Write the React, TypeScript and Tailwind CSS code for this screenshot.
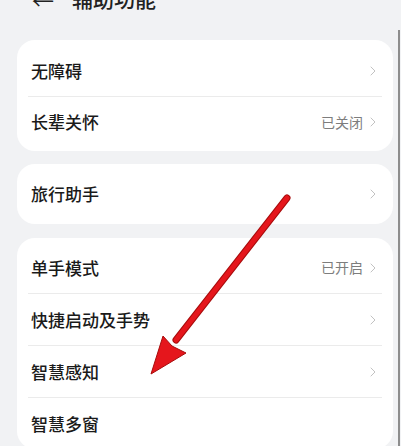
import { ChevronRight } from "lucide-react";

interface Row {
  label: string;
  value?: string;
  chevron?: boolean;
}

const GROUPS: { rows: Row[]; rowH: string; pad: string; gap: string }[] = [
  {
    rows: [
      { label: "无障碍", chevron: true },
      { label: "长辈关怀", value: "已关闭", chevron: true },
    ],
    rowH: "h-[50px]",
    pad: "pt-[6px] pb-[4px]",
    gap: "mt-[40px]",
  },
  {
    rows: [{ label: "旅行助手", chevron: true }],
    rowH: "h-[60px]",
    pad: "py-0",
    gap: "mt-[13px]",
  },
  {
    rows: [
      { label: "单手模式", value: "已开启", chevron: true },
      { label: "快捷启动及手势", chevron: true },
      { label: "智慧感知", chevron: true },
      { label: "智慧多窗" },
    ],
    rowH: "h-[51px]",
    pad: "pt-[4px]",
    gap: "mt-[14px]",
  },
];

function SettingRow({ row, h, last }: { row: Row; h: string; last: boolean }) {
  return (
    <div className="flex flex-col">
      <div className={`flex items-center justify-between pl-[14px] pr-[12px] ${h}`}>
        <span className="text-[17px] font-medium text-[#1a1a1a]">{row.label}</span>
        <div className="flex items-center gap-[2px]">
          {row.value && <span className="text-[14px] text-[#7d7d7d]">{row.value}</span>}
          {row.chevron && <ChevronRight size={16} strokeWidth={1.5} className="text-[#c2c2c2]" />}
        </div>
      </div>
      {!last && <div className="mx-[11px] h-px bg-[#ebebeb]" />}
    </div>
  );
}

export default function App() {
  return (
    <div
      className="relative w-[401px] h-[446px] overflow-hidden bg-[#f1f2f4] flex"
      style={{ fontFamily: '"Noto Sans CJK SC", "Noto Sans", sans-serif' }}
    >
      <div className="flex-1 flex flex-col">
        <div className="h-0 flex items-center pl-[32px] gap-[18px]">
          <span className="text-[22px] text-[#222] leading-none -mt-[2px]">←</span>
          <span className="text-[21px] font-medium text-[#222] leading-none -mt-[4px]">辅助功能</span>
        </div>
        {GROUPS.map((g, gi) => (
          <div key={gi} className={`${g.gap} ml-[17px] mr-[5px] bg-white rounded-[18px] ${g.pad}`}>
            {g.rows.map((r, i) => (
              <SettingRow key={i} row={r} h={g.rowH} last={i === g.rows.length - 1} />
            ))}
          </div>
        ))}
      </div>
      <div className="w-[3px] flex flex-col">
        <div className="h-[30px]" />
        <div className="flex-1 w-[2px] bg-[#8d8d8d]" />
      </div>

      {/* red annotation arrow */}
      <svg className="absolute left-0 top-0 pointer-events-none" width="401" height="446" viewBox="0 0 401 446">
        <line x1="287" y1="198" x2="176" y2="340" stroke="#a80c0c" strokeWidth="7" strokeLinecap="round" />
        <line x1="287" y1="198" x2="176" y2="340" stroke="#e5161c" strokeWidth="5" strokeLinecap="round" />
        <polygon
          points="151,374 163,336 172,346 186,353"
          fill="#e5161c"
          stroke="#a80c0c"
          strokeWidth="1"
          strokeLinejoin="round"
        />
      </svg>
    </div>
  );
}
